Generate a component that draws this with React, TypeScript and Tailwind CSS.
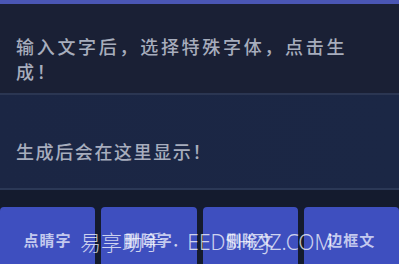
export default function App() {
  const buttons = ["点睛字", "删除字", "删除文", "边框文"];
  return (
    <div
      className="relative w-[399px] h-[264px] overflow-hidden bg-[#141b2e]"
      style={{ fontFamily: '"Noto Sans CJK SC", "Noto Sans", sans-serif' }}
    >
      <div className="h-[4px] bg-[#4a56b4]" />
      <div className="h-[89px] bg-[#1a2035] pl-[16px] pt-[30px] text-[18px] leading-[25px] tracking-[2.7px] text-[#a7adbd] font-medium">
        输入文字后，选择特殊字体，点击生
        <br />
        成！
      </div>
      <div className="h-[2px] bg-[#2b3652]" />
      <div className="h-[93px] bg-gradient-to-r from-[#1b2644] to-[#1b2745] pl-[16px] pt-[44px] text-[18px] leading-[25px] tracking-[1.6px] text-[#a7adbd] font-medium">
        生成后会在这里显示！
      </div>
      <div className="h-[2px] bg-[#2b3856]" />
      <div className="h-[17px] bg-[#141b2e]" />
      <div className="flex gap-[6px]">
        {buttons.map((b) => (
          <div
            key={b}
            className="flex-1 h-[60px] rounded-[4px] bg-[#3e4fbf] flex items-start justify-center pt-[22px] text-[15px] font-bold tracking-[1px] text-[#c3c9ee]"
          >
            {b}
          </div>
        ))}
      </div>
      <div className="absolute left-[80px] top-[228px] text-[21px] leading-[26px] font-light text-white/75 whitespace-nowrap">
        易享助手 <span className="text-[14px] align-middle">•</span>{" "}
        <span style={{ fontFamily: '"Noto Sans", sans-serif' }}>EEDSHZJZ.COM</span>
      </div>
    </div>
  );
}
